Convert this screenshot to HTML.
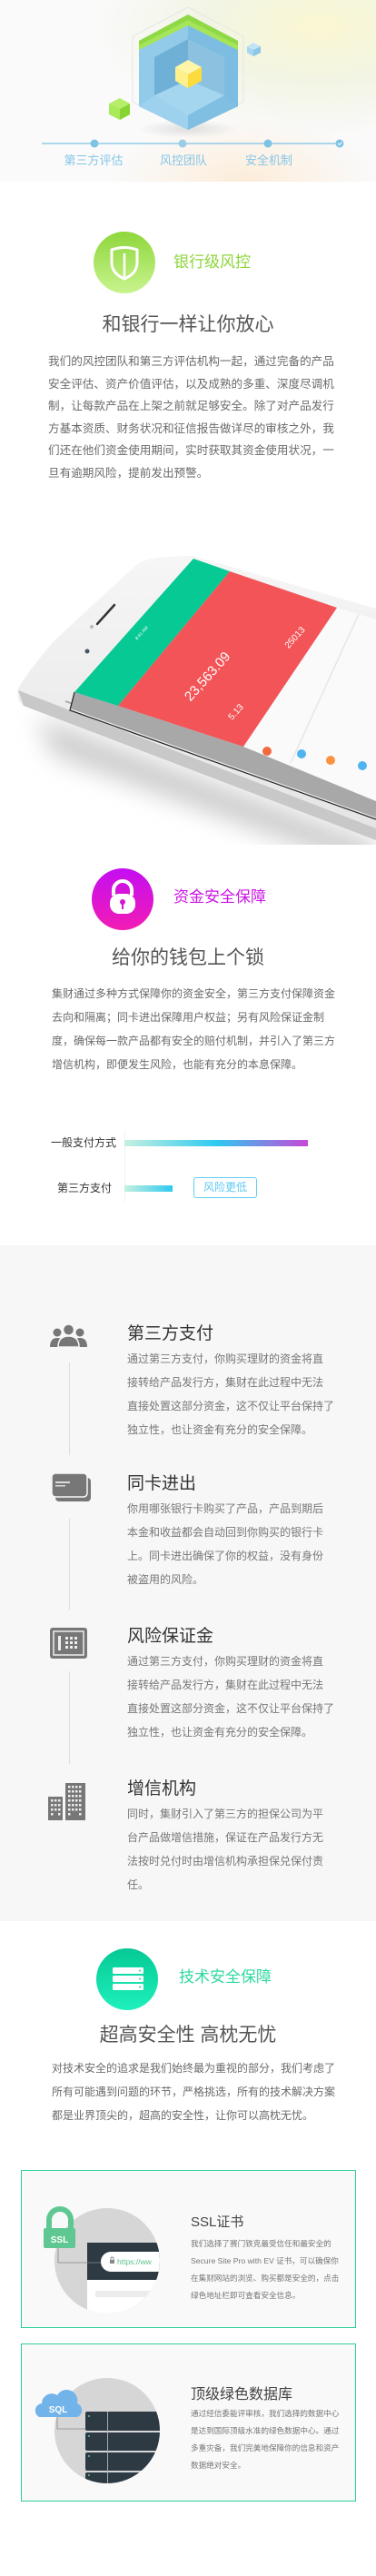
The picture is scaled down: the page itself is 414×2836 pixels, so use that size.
<!DOCTYPE html>
<html><head><meta charset="utf-8">
<style>
*{margin:0;padding:0;box-sizing:border-box}
html,body{width:414px;height:2836px;background:#fff;overflow:hidden}
body{position:relative;font-family:"Liberation Sans","Noto Sans CJK SC",sans-serif;color:#666}
.a{position:absolute;white-space:nowrap}
.p{position:absolute;white-space:nowrap;font-size:12px;color:#6a6a6a}
.p div{height:26px;line-height:26px}
.h2{position:absolute;left:0;width:414px;text-align:center;font-size:21px;color:#555;line-height:30px}
.gray{position:absolute;left:0;top:1371px;width:414px;height:744px;background:#f7f7f7}
.it{position:absolute;left:140px}
.it .t{font-size:19px;color:#333;line-height:28px;height:28px}
.it .p{position:static;font-size:12px;color:#777}
.vl{position:absolute;left:76px;width:1px;background:#ddd}
.card{position:absolute;left:23px;width:369px;height:174px;border:1.5px solid #2fd096;background:#f9f9f9}
.ct{position:absolute;left:186px;font-size:15px;color:#444}
.cp{position:absolute;left:186px;font-size:8.6px;color:#777;line-height:19px;white-space:nowrap}
</style></head><body>

<!-- HERO -->
<svg class="a" style="left:0;top:0" width="414" height="200" viewBox="0 0 414 200">
<defs>
<radialGradient id="hy" cx="0.85" cy="0.15" r="0.6"><stop offset="0" stop-color="#fbf7d2"/><stop offset="0.5" stop-color="#f2f5e4"/><stop offset="1" stop-color="#fafafa"/></radialGradient>
<radialGradient id="ho" cx="0.65" cy="1" r="0.35"><stop offset="0" stop-color="#fdebd6" stop-opacity="0.9"/><stop offset="1" stop-color="#fdebd6" stop-opacity="0"/></radialGradient>
<radialGradient id="hs" cx="0.5" cy="0.5" r="0.5"><stop offset="0" stop-color="#ccc" stop-opacity="0.6"/><stop offset="1" stop-color="#ccc" stop-opacity="0"/></radialGradient>
</defs>
<rect width="414" height="200" fill="url(#hy)"/>
<rect width="414" height="200" fill="url(#ho)"/>
<ellipse cx="207" cy="142" rx="55" ry="10" fill="url(#hs)"/>
<polygon points="207,8 268,40 268,112 207,144 146,112 146,40" fill="none" stroke="#e6e6e6" stroke-width="1"/>
<!-- outer block -->
<polygon points="207,16 262,45 262,117 207,143 153,117 153,45" fill="#88c4e6"/>
<polygon points="207,26 262,53 262,117 207,143" fill="#7dbde2"/>
<polygon points="207,26 153,53 153,117 207,143" fill="#92cbea"/>
<polygon points="207,16 262,45 262,53 207,26 153,53 153,45" fill="#8fd944"/>
<polygon points="207,22 262,50 262,55 207,28 153,55 153,50" fill="#a6e45a"/>
<!-- recess -->
<polygon points="207,43 170,63 170,105 207,88" fill="#6fb0d6"/>
<polygon points="207,43 247,63 247,105 207,88" fill="#8cc2e0"/>
<polygon points="170,105 207,88 247,105 207,127" fill="#a5d6f0"/>
<polygon points="153,117 170,105 207,127 207,143" fill="#9ed1ee"/>
<polygon points="262,117 247,105 207,127 207,143" fill="#80bfe2"/>
<!-- yellow cube -->
<polygon points="207,66 222,74 207,82 193,74" fill="#fff6a8"/>
<polygon points="193,74 207,82 207,97 193,89" fill="#fff08a"/>
<polygon points="222,74 207,82 207,97 222,89" fill="#fbdc3c"/>
<!-- green small cube -->
<polygon points="132,108 143,114 132,120 120,114" fill="#b6ee6a"/>
<polygon points="120,114 132,120 132,132 120,126" fill="#a8ea5a"/>
<polygon points="143,114 132,120 132,132 143,126" fill="#86d430"/>
<!-- blue small cube -->
<polygon points="279,47 287,51 279,55 272,51" fill="#c4e4f6"/>
<polygon points="272,51 279,55 279,62 272,58" fill="#a8d6f0"/>
<polygon points="287,51 279,55 279,62 287,58" fill="#8cc6e8"/>
<!-- timeline -->
<line x1="46" y1="158" x2="378" y2="158" stroke="#7ec3e4" stroke-width="1.2"/>
<circle cx="104" cy="158" r="4.5" fill="#7ec3e4"/>
<circle cx="201" cy="158" r="4.5" fill="#9ccde6"/>
<circle cx="295" cy="158" r="4.5" fill="#7ec3e4"/>
<circle cx="374" cy="158" r="4.5" fill="#7ec3e4"/>
<path d="M372,158 l1.5,1.5 l3,-3" stroke="#fff" stroke-width="1" fill="none"/>
<text x="103" y="181" font-size="13" fill="#86c6e6" text-anchor="middle" font-family="Liberation Sans,Noto Sans CJK SC,sans-serif">第三方评估</text>
<text x="202" y="181" font-size="13" fill="#86c6e6" text-anchor="middle" font-family="Liberation Sans,Noto Sans CJK SC,sans-serif">风控团队</text>
<text x="296" y="181" font-size="13" fill="#86c6e6" text-anchor="middle" font-family="Liberation Sans,Noto Sans CJK SC,sans-serif">安全机制</text>
</svg>

<!-- SECTION 1 -->
<svg class="a" style="left:103px;top:255px" width="68" height="68" viewBox="0 0 68 68">
<defs><linearGradient id="g1" x1="0" y1="0" x2="0" y2="1"><stop offset="0" stop-color="#8fd63c"/><stop offset="1" stop-color="#c8f48e"/></linearGradient></defs>
<circle cx="34" cy="34" r="34" fill="url(#g1)"/>
<path d="M20,20 Q34,15 48,20 L48,34 Q48,46 34,52 Q20,46 20,34 Z" fill="none" stroke="#fff" stroke-width="3"/>
<line x1="34" y1="24" x2="34" y2="50" stroke="#fff" stroke-width="2.5"/>
</svg>
<div class="a" style="left:191px;top:277px;font-size:17px;color:#8dd43a;line-height:24px">银行级风控</div>
<div class="h2" style="top:343px">和银行一样让你放心</div>
<div class="p" style="left:53px;top:386px;font-size:12.6px;color:#6a6a6a">
<div style="height:24.5px;line-height:24.5px">我们的风控团队和第三方评估机构一起，通过完备的产品</div>
<div style="height:24.5px;line-height:24.5px">安全评估、资产价值评估，以及成熟的多重、深度尽调机</div>
<div style="height:24.5px;line-height:24.5px">制，让每款产品在上架之前就足够安全。除了对产品发行</div>
<div style="height:24.5px;line-height:24.5px">方基本资质、财务状况和征信报告做详尽的审核之外，我</div>
<div style="height:24.5px;line-height:24.5px">们还在他们资金使用期间，实时获取其资金使用状况，一</div>
<div style="height:24.5px;line-height:24.5px">旦有逾期风险，提前发出预警。</div>
</div>

<!-- PHONE -->
<svg class="a" style="left:0;top:590px" width="414" height="340" viewBox="0 590 414 340">
<defs>
<filter id="bl" x="-20%" y="-20%" width="140%" height="140%"><feGaussianBlur stdDeviation="14"/></filter>
<linearGradient id="bd" x1="0" y1="0" x2="0" y2="1"><stop offset="0" stop-color="#f6f6f6"/><stop offset="1" stop-color="#e4e4e4"/></linearGradient>
</defs>
<polygon points="40,790 414,930 414,960 60,830" fill="#999" opacity="0.55" filter="url(#bl)"/>
<path d="M150,622 Q160,612 213,612 L414,670 L414,925 L26,777 Q18,772 20,758 Q30,740 60,705 Z" fill="url(#bd)"/>
<path d="M20,760 L414,912 L414,925 L26,777 Z" fill="#c8c8c8"/>
<path d="M72,772 L92,779 M118,783 L155,797 M160,799 L205,816" stroke="#b0b0b0" stroke-width="2"/>
<polygon points="77,780 82,762 130,777 268,822 414,880 414,900" fill="#a8a8a8"/>
<polyline points="82,762 77,782 414,902" fill="none" stroke="#222" stroke-width="1.2"/>
<polygon points="371,669 414,682 414,882 268,822" fill="#fafafa"/>
<line x1="395" y1="676" x2="320" y2="840" stroke="#e6e6e6" stroke-width="1.5"/>
<polygon points="82,762 213,615 253,629 130,777" fill="#06c994"/>
<polygon points="253,629 371,669 268,822 130,777" fill="#f35457"/>
<circle cx="101" cy="690" r="2" fill="#bbb"/>
<line x1="107" y1="687" x2="126" y2="666" stroke="#333" stroke-width="2.5" stroke-linecap="round"/>
<circle cx="96" cy="717" r="2.5" fill="#456"/>
<g font-family="Liberation Sans,sans-serif" fill="#fff">
<text transform="translate(232,748) rotate(-48)" font-size="15" text-anchor="middle">23,563.09</text>
<text transform="translate(327,704) rotate(-48)" font-size="10" text-anchor="middle">25013</text>
<text transform="translate(262,786) rotate(-48)" font-size="10" text-anchor="middle">5.13</text>
<text transform="translate(157,698) rotate(-48)" font-size="5" text-anchor="middle">8:41 AM</text>
</g>
<circle cx="294" cy="827" r="5" fill="#f2683f"/>
<circle cx="332" cy="830" r="5" fill="#4fb3f0"/>
<circle cx="364" cy="837" r="5" fill="#fb9240"/>
<circle cx="399" cy="843" r="5" fill="#4fb3f0"/>
</svg>

<!-- SECTION 2 -->
<svg class="a" style="left:101px;top:956px" width="68" height="68" viewBox="0 0 68 68">
<defs><linearGradient id="g2" x1="0" y1="0" x2="0" y2="1"><stop offset="0" stop-color="#c40ef2"/><stop offset="1" stop-color="#f21cb4"/></linearGradient></defs>
<circle cx="34" cy="34" r="34" fill="url(#g2)"/>
<path d="M24,30 L24,24 A10,10 0 0 1 44,24 L44,30" fill="none" stroke="#fff" stroke-width="4"/>
<rect x="20" y="28" width="28" height="22" rx="10" fill="#fff"/>
<circle cx="34" cy="37" r="3" fill="#d514d6"/><rect x="33" y="38" width="2" height="7" fill="#d514d6"/>
</svg>
<div class="a" style="left:191px;top:976px;font-size:17px;color:#cc17e6;line-height:24px">资金安全保障</div>
<div class="h2" style="top:1040px">给你的钱包上个锁</div>
<div class="p" style="left:57px;top:1081px">
<div>集财通过多种方式保障你的资金安全，第三方支付保障资金</div>
<div>去向和隔离；同卡进出保障用户权益；另有风险保证金制</div>
<div>度，确保每一款产品都有安全的赔付机制，并引入了第三方</div>
<div>增信机构，即便发生风险，也能有充分的本息保障。</div>
</div>
<div class="a" style="left:137px;top:1245px;width:1px;height:78px;background:#e8f4ef"></div>
<div class="a" style="left:56px;top:1250px;font-size:12px;color:#333;line-height:16px">一般支付方式</div>
<div class="a" style="left:137px;top:1255px;width:202px;height:7px;background:linear-gradient(90deg,#c6f0e0,#2dcaf0 50%,#c648d8)"></div>
<div class="a" style="left:63px;top:1300px;font-size:12px;color:#333;line-height:16px">第三方支付</div>
<div class="a" style="left:137px;top:1305px;width:53px;height:7px;background:linear-gradient(90deg,#c6f0e0,#2dcaf0)"></div>
<div class="a" style="left:213px;top:1296px;width:70px;height:23px;border:1px solid #5fd0f0;border-radius:3px;text-align:center;line-height:21px;font-size:12px;color:#5fcaf0">风险更低</div>

<!-- SECTION 3 -->
<div class="gray"></div>
<svg class="a" style="left:55px;top:1457px" width="41" height="26" viewBox="0 0 41 26">
<g fill="#777">
<circle cx="8" cy="10" r="4.5"/><path d="M0,26 Q0,16 8,16 Q16,16 16,26Z"/>
<circle cx="33" cy="10" r="4.5"/><path d="M25,26 Q25,16 33,16 Q41,16 41,26Z"/>
<circle cx="20.5" cy="7" r="6" stroke="#f7f7f7" stroke-width="1.5"/><path d="M9,26 Q9,14 20.5,14 Q32,14 32,26Z" stroke="#f7f7f7" stroke-width="1.5"/>
</g></svg>
<div class="vl" style="top:1500px;height:102px"></div>
<div class="it" style="top:1455px"><div class="t">第三方支付</div><div class="p">
<div>通过第三方支付，你购买理财的资金将直</div><div>接转给产品发行方，集财在此过程中无法</div><div>直接处置这部分资金，这不仅让平台保持了</div><div>独立性，也让资金有充分的安全保障。</div></div></div>

<svg class="a" style="left:57px;top:1622px" width="43" height="31" viewBox="0 0 43 31">
<rect x="4" y="5" width="39" height="26" rx="4" fill="#777"/>
<rect x="0" y="0" width="39" height="26" rx="4" fill="#777" stroke="#f7f7f7" stroke-width="1.5"/>
<rect x="4" y="9" width="16" height="2" fill="#ddd"/><rect x="4" y="13" width="11" height="1.5" fill="#ddd"/>
</svg>
<div class="vl" style="top:1672px;height:100px"></div>
<div class="it" style="top:1620px"><div class="t">同卡进出</div><div class="p">
<div>你用哪张银行卡购买了产品，产品到期后</div><div>本金和收益都会自动回到你购买的银行卡</div><div>上。同卡进出确保了你的权益，没有身份</div><div>被盗用的风险。</div></div></div>

<svg class="a" style="left:55px;top:1792px" width="41" height="34" viewBox="0 0 41 34">
<rect x="0" y="0" width="41" height="34" rx="3" fill="#777"/>
<rect x="4" y="4" width="33" height="26" fill="none" stroke="#eee" stroke-width="1.5"/>
<rect x="9" y="9" width="3" height="16" fill="#eee"/>
<g fill="#eee"><rect x="17" y="10" width="3" height="3"/><rect x="22" y="10" width="3" height="3"/><rect x="27" y="10" width="3" height="3"/><rect x="17" y="15" width="3" height="3"/><rect x="22" y="15" width="3" height="3"/><rect x="27" y="15" width="3" height="3"/><rect x="17" y="20" width="3" height="3"/><rect x="22" y="20" width="3" height="3"/><rect x="27" y="20" width="3" height="3"/></g>
</svg>
<div class="vl" style="top:1840px;height:102px"></div>
<div class="it" style="top:1788px"><div class="t">风险保证金</div><div class="p">
<div>通过第三方支付，你购买理财的资金将直</div><div>接转给产品发行方，集财在此过程中无法</div><div>直接处置这部分资金，这不仅让平台保持了</div><div>独立性，也让资金有充分的安全保障。</div></div></div>

<svg class="a" style="left:53px;top:1963px" width="41" height="41" viewBox="0 0 41 41">
<rect x="0" y="15" width="16" height="26" fill="#777"/>
<rect x="19" y="0" width="22" height="41" fill="#777"/>
<g fill="#eee">
<rect x="3" y="18" width="2.5" height="2.5"/><rect x="7" y="18" width="2.5" height="2.5"/><rect x="11" y="18" width="2.5" height="2.5"/>
<rect x="3" y="23" width="2.5" height="2.5"/><rect x="7" y="23" width="2.5" height="2.5"/><rect x="11" y="23" width="2.5" height="2.5"/>
<rect x="3" y="28" width="2.5" height="2.5"/><rect x="7" y="28" width="2.5" height="2.5"/><rect x="11" y="28" width="2.5" height="2.5"/>
<rect x="3" y="33" width="2.5" height="2.5"/><rect x="11" y="33" width="2.5" height="2.5"/>
</g>
<g fill="#eee">
<rect x="22" y="3" width="2.5" height="2.5"/><rect x="26" y="3" width="2.5" height="2.5"/><rect x="30" y="3" width="2.5" height="2.5"/><rect x="34" y="3" width="2.5" height="2.5"/>
<rect x="22" y="8" width="2.5" height="2.5"/><rect x="26" y="8" width="2.5" height="2.5"/><rect x="30" y="8" width="2.5" height="2.5"/><rect x="34" y="8" width="2.5" height="2.5"/>
<rect x="22" y="13" width="2.5" height="2.5"/><rect x="26" y="13" width="2.5" height="2.5"/><rect x="30" y="13" width="2.5" height="2.5"/><rect x="34" y="13" width="2.5" height="2.5"/>
<rect x="22" y="18" width="2.5" height="2.5"/><rect x="26" y="18" width="2.5" height="2.5"/><rect x="30" y="18" width="2.5" height="2.5"/><rect x="34" y="18" width="2.5" height="2.5"/>
<rect x="22" y="23" width="2.5" height="2.5"/><rect x="26" y="23" width="2.5" height="2.5"/><rect x="30" y="23" width="2.5" height="2.5"/><rect x="34" y="23" width="2.5" height="2.5"/>
<rect x="22" y="28" width="2.5" height="2.5"/><rect x="26" y="28" width="2.5" height="2.5"/><rect x="30" y="28" width="2.5" height="2.5"/><rect x="34" y="28" width="2.5" height="2.5"/>
<rect x="22" y="33" width="2.5" height="2.5"/><rect x="34" y="33" width="2.5" height="2.5"/>
</g></svg>
<div class="it" style="top:1956px"><div class="t">增信机构</div><div class="p">
<div>同时，集财引入了第三方的担保公司为平</div><div>台产品做增信措施，保证在产品发行方无</div><div>法按时兑付时由增信机构承担保兑保付责</div><div>任。</div></div></div>

<!-- SECTION 4 -->
<svg class="a" style="left:106px;top:2145px" width="68" height="68" viewBox="0 0 68 68">
<defs><linearGradient id="g3" x1="0" y1="0" x2="0" y2="1"><stop offset="0" stop-color="#06c994"/><stop offset="1" stop-color="#1ef0bc"/></linearGradient></defs>
<circle cx="34" cy="34" r="34" fill="url(#g3)"/>
<g fill="#fff"><rect x="18" y="21" width="34" height="7" rx="1.5"/><rect x="18" y="30" width="34" height="7" rx="1.5"/><rect x="18" y="39" width="34" height="7" rx="1.5"/></g>
<g fill="#14d6a4"><circle cx="48" cy="24.5" r="1"/><circle cx="48" cy="33.5" r="1"/><circle cx="48" cy="42.5" r="1"/></g>
</svg>
<div class="a" style="left:197px;top:2165px;font-size:17px;color:#2ed8a0;line-height:24px">技术安全保障</div>
<div class="h2" style="top:2226px">超高安全性 高枕无忧</div>
<div class="p" style="left:57px;top:2264px">
<div>对技术安全的追求是我们始终最为重视的部分，我们考虑了</div>
<div>所有可能遇到问题的环节，严格挑选，所有的技术解决方案</div>
<div>都是业界顶尖的，超高的安全性，让你可以高枕无忧。</div>
</div>

<!-- CARD 1 -->
<div class="card" style="top:2389px">
<svg class="a" style="left:10px;top:25px" width="150" height="140" viewBox="33 2414 150 140">
<defs><clipPath id="c1"><circle cx="117" cy="2488" r="58"/></clipPath></defs>
<circle cx="117" cy="2488" r="58" fill="#d6d6d6"/>
<g clip-path="url(#c1)">
<rect x="95" y="2468" width="90" height="41" fill="#2d3a44"/>
<rect x="110" y="2478" width="80" height="22" rx="11" fill="#fff"/>
<rect x="95" y="2509" width="90" height="40" fill="#fff"/>
<rect x="104" y="2521" width="80" height="7" fill="#ececec"/>
</g>
<rect x="120" y="2487" width="5" height="4" fill="#888"/><path d="M121,2487 v-1.5 a1.5,1.5 0 0 1 3,0 v1.5" stroke="#888" fill="none"/>
<text x="128" y="2492" font-size="8.5" fill="#5bbf8a" font-family="Liberation Sans,sans-serif">https://ww</text>
<polyline points="63,2474 63,2490 110,2490" fill="none" stroke="#888" stroke-width="0.8"/>
<path d="M53,2455 L53,2443 A12,12 0 0 1 77,2443 L77,2455" fill="none" stroke="#5fc792" stroke-width="6"/>
<rect x="47" y="2452" width="35" height="22" rx="2" fill="#5fc792"/>
<text x="64.5" y="2468" font-size="10" font-weight="bold" fill="#fff" text-anchor="middle" font-family="Liberation Sans,sans-serif">SSL</text>
</svg>
<div class="ct" style="top:45px">SSL证书</div>
<div class="cp" style="top:71px">我们选择了赛门铁克最受信任和最安全的<br>Secure Site Pro with EV 证书，可以确保你<br>在集财网站的浏览、购买都是安全的，点击<br>绿色地址栏即可查看安全信息。</div>
</div>

<!-- CARD 2 -->
<div class="card" style="top:2580px">
<svg class="a" style="left:10px;top:25px" width="150" height="140" viewBox="33 2605 150 140">
<defs><clipPath id="c2"><circle cx="117" cy="2675" r="58"/></clipPath></defs>
<circle cx="117" cy="2675" r="58" fill="#d6d6d6"/>
<g clip-path="url(#c2)" fill="#2d3a44">
<rect x="93" y="2654" width="92" height="21" rx="2"/>
<rect x="93" y="2677" width="92" height="20" rx="2"/>
<rect x="93" y="2699" width="92" height="20" rx="2"/>
<rect x="93" y="2721" width="92" height="20" rx="2"/>
<rect x="117" y="2654" width="1" height="90" fill="#aaa"/>
</g>
<g fill="#5fc792"><circle cx="97" cy="2659" r="1"/><circle cx="97" cy="2681" r="1"/><circle cx="97" cy="2703" r="1"/><circle cx="97" cy="2724" r="1"/></g>
<polyline points="62,2660 62,2673 93,2673" fill="none" stroke="#888" stroke-width="0.8"/>
<path d="M42,2660 A8,8 0 0 1 45,2645 A11,11 0 0 1 62,2636 A12,12 0 0 1 84,2645 A8,8 0 0 1 84,2660 Z" fill="#72b4ea"/>
<text x="63" y="2655" font-size="10" font-weight="bold" fill="#fff" text-anchor="middle" font-family="Liberation Sans,sans-serif">SQL</text>
</svg>
<div class="ct" style="top:41px;font-size:16px">顶级绿色数据库</div>
<div class="cp" style="top:67px">通过经信委能评审核，我们选择的数据中心<br>是达到国际顶级水准的绿色数据中心。通过<br>多重灾备，我们完美地保障你的信息和资产<br>数据绝对安全。</div>
</div>

</body></html>
